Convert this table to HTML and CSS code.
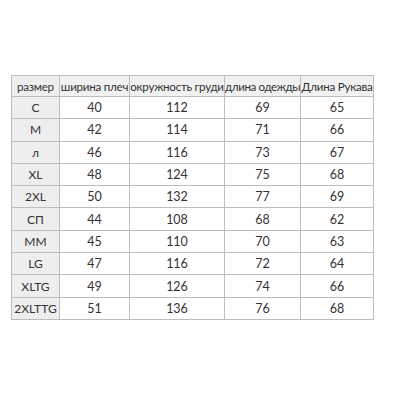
FILE: index.html
```html
<!DOCTYPE html>
<html>
<head>
<meta charset="utf-8">
<link rel="stylesheet" href="styles.css">
</head>
<body>
<table class="sizes">
<colgroup>
<col class="c1"><col class="c2"><col class="c3"><col class="c4"><col class="c5">
</colgroup>
<thead>
<tr><th class="first">размер</th><th>ширина плеч</th><th>окружность груди</th><th class="tight">длина одежды</th><th>Длина Рукава</th></tr>
</thead>
<tbody>
<tr><td class="first">C</td><td>40</td><td>112</td><td>69</td><td>65</td></tr>
<tr><td class="first">M</td><td>42</td><td>114</td><td>71</td><td>66</td></tr>
<tr><td class="first">л</td><td>46</td><td>116</td><td>73</td><td>67</td></tr>
<tr><td class="first">XL</td><td>48</td><td>124</td><td>75</td><td>68</td></tr>
<tr><td class="first">2XL</td><td>50</td><td>132</td><td>77</td><td>69</td></tr>
<tr><td class="first">СП</td><td>44</td><td>108</td><td>68</td><td>62</td></tr>
<tr><td class="first">MM</td><td>45</td><td>110</td><td>70</td><td>63</td></tr>
<tr><td class="first">LG</td><td>47</td><td>116</td><td>72</td><td>64</td></tr>
<tr><td class="first">XLTG</td><td>49</td><td>126</td><td>74</td><td>66</td></tr>
<tr><td class="first">2XLTTG</td><td>51</td><td>136</td><td>76</td><td>68</td></tr>
</tbody>
</table>
</body>
</html>
```
FILE: styles.css
```css
html, body {
  margin: 0;
  padding: 0;
  background: #ffffff;
}
body {
  padding: 75px 0 0 11px;
  font-family: Lato, "Noto Sans", sans-serif;
  color: #333333;
}
.sizes {
  border-collapse: collapse;
  table-layout: fixed;
  width: 362px;
  font-size: 12.5px;
}
.c1 { width: 48px; }
.c2 { width: 70px; }
.c3 { width: 95px; }
.c4 { width: 76px; }
.c5 { width: 73px; }
.sizes th,
.sizes td {
  border: 1px solid #bdbdbd;
  height: 21.3px;
  padding: 0;
  text-align: center;
  font-weight: normal;
  white-space: nowrap;
  overflow: hidden;
}
.sizes thead th {
  height: 20px;
  background: #f1f1f1;
  font-size: 11.6px;
  letter-spacing: -0.25px;
}
.sizes thead th.tight {
  letter-spacing: -0.4px;
}
.sizes .first {
  background: #eeeeee;
}
.sizes tbody .first {
  font-size: 12px;
}
```
